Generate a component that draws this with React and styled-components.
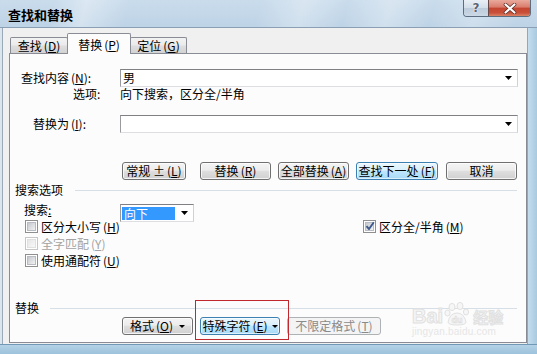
import React from "react";
import styled, { createGlobalStyle, css } from "styled-components";

const FONT = `"Noto Sans CJK SC", "Noto Sans", "DejaVu Sans", sans-serif`;

const GlobalStyle = createGlobalStyle`
  html, body { margin: 0; padding: 0; background: #b9d1e6; }
  body { width: 537px; height: 354px; overflow: hidden; font-family: ${FONT}; font-size: 12px; color: #000; }
  * { box-sizing: border-box; }
`;

const Window = styled.div`
  width: 537px;
  height: 354px;
  display: flex;
  flex-direction: column;
  overflow: hidden;
`;

const TitleBar = styled.div`
  height: 28px;
  flex: none;
  display: flex;
  align-items: flex-start;
  border-bottom: 1px solid #8a9fb3;
  background:
    linear-gradient(105deg,
      rgba(255,255,255,0) 0%, rgba(255,255,255,0) 10%,
      rgba(255,255,255,0.35) 16%, rgba(255,255,255,0) 24%,
      rgba(255,255,255,0) 48%, rgba(255,255,255,0.3) 56%, rgba(255,255,255,0) 64%,
      rgba(255,255,255,0.3) 72%, rgba(255,255,255,0) 80%,
      rgba(255,255,255,0.25) 88%, rgba(255,255,255,0) 96%),
    linear-gradient(180deg, #cadcec 0%, #bdd3e6 100%);
`;

const TitleText = styled.div`
  padding: 8px 0 0 8px;
  font-weight: 700;
  font-size: 13px;
  line-height: 14px;
  color: #000;
`;

const CaptionButtons = styled.div`
  margin-left: auto;
  margin-right: 6px;
  display: flex;
  height: 17px;
  border: 1px solid #5d6d80;
  border-top: none;
  border-radius: 0 0 4px 4px;
  overflow: hidden;
`;

const CaptionButton = styled.div`
  width: ${(p) => p.$w}px;
  height: 100%;
  display: flex;
  align-items: center;
  justify-content: center;
  ${(p) =>
    p.$close
      ? css`
          border-left: 1px solid #6a4a48;
          background: linear-gradient(#e9aa9c 0%, #d97c6c 45%, #c4442f 50%, #c9503a 80%, #da8466 100%);
        `
      : css`
          background: linear-gradient(#e9eff5 0%, #d3dee9 50%, #bccbda 50%, #cbd8e5 100%);
        `}
`;

const HelpGlyph = styled.span`
  font-family: "DejaVu Sans", sans-serif;
  font-weight: 700;
  font-size: 12px;
  line-height: 12px;
  color: #5a6472;
  text-shadow: 0 0 2px #fff, 0 0 1px #fff;
`;

const Middle = styled.div`
  flex: 1;
  min-height: 0;
  display: flex;
`;

const LeftFrame = styled.div`
  width: 3px;
  flex: none;
  background: #dbe5ee;
  border-right: 1px solid #9aa9b8;
`;

const RightFrame = styled.div`
  width: 10px;
  flex: none;
  border-left: 1px solid #8ea8bd;
  background: linear-gradient(90deg, #c4ddee, #a8c9df);
`;

const BottomFrame = styled.div`
  height: 10px;
  flex: none;
  border-top: 1px solid #7199b5;
  background: linear-gradient(#b3d2e6, #9dc2db);
`;

const Client = styled.div`
  flex: 1;
  min-width: 0;
  background: #f0f0f0;
  padding: 5px 0 1px 6px;
  display: flex;
  flex-direction: column;
`;

const TabStrip = styled.div`
  display: flex;
  align-items: flex-end;
  height: 21px;
  margin-bottom: -1px;
  padding-left: 1px;
  position: relative;
  z-index: 1;
`;

const Tab = styled.div`
  width: ${(p) => p.$w}px;
  margin-left: ${(p) => (p.$first ? 0 : -1)}px;
  border: 1px solid #898c95;
  border-bottom: none;
  border-radius: 2px 2px 0 0;
  display: flex;
  align-items: center;
  justify-content: center;
  white-space: nowrap;
  ${(p) =>
    p.$active
      ? css`
          height: 21px;
          background: #fcfcfc;
          position: relative;
          z-index: 1;
        `
      : css`
          height: 16px;
          margin-bottom: 1px;
          background: linear-gradient(#f3f3f3 0%, #ebebeb 45%, #dedede 55%, #d2d2d2 100%);
        `}
`;

const Panel = styled.div`
  flex: 1;
  border: 1px solid #898c95;
  background: #fcfcfc;
  position: relative;
  padding: 0 8px 0 5px;
  display: flex;
  flex-direction: column;
`;

const Acc = styled.span`
  margin-left: 2px;
`;

const Mn = styled.u`
  text-decoration: underline;
  text-underline-offset: 1px;
`;

const Key = ({ k }) => (
  <Acc>
    (<Mn>{k}</Mn>)
  </Acc>
);

const FieldRow = styled.div`
  display: flex;
  align-items: center;
  height: ${(p) => p.$h || 18}px;
  margin-top: ${(p) => p.$mt || 0}px;
  flex: none;
`;

const FieldLabel = styled.div`
  width: ${(p) => p.$w}px;
  padding-left: ${(p) => p.$pl}px;
  flex: none;
  white-space: nowrap;
  line-height: ${(p) => (p.$top ? 12 : 14)}px;
  align-self: ${(p) => (p.$top ? "flex-start" : "auto")};
`;

const fieldBorder = css`
  border: 1px solid;
  border-color: #7f8083 #cfd1d4 #dcdee1 #999a9e;
  background: #fff;
`;

const Combo = styled.div`
  ${fieldBorder};
  flex: ${(p) => (p.$w ? "none" : 1)};
  width: ${(p) => (p.$w ? `${p.$w}px` : "auto")};
  height: 18px;
  display: flex;
  align-items: center;
  padding: 0 5px 0 ${(p) => p.$pl ?? 2}px;
`;

const ComboText = styled.div`
  flex: 1;
  line-height: 14px;
  white-space: nowrap;
`;

const Highlight = styled.div`
  width: ${(p) => p.$w}px;
  height: 13px;
  line-height: 13px;
  background: #3399ff;
  color: #fff;
  padding-left: 2px;
  margin-right: auto;
`;

const Arrow = ({ w = 7, h = 4, c = "#000" }) => (
  <svg width={w} height={h} viewBox={`0 0 ${w} ${h}`} style={{ flex: "none" }}>
    <polygon points={`0,0 ${w},0 ${w / 2},${h}`} fill={c} />
  </svg>
);

const ButtonRow = styled.div`
  display: flex;
  height: 18px;
  margin-top: ${(p) => p.$mt}px;
  padding-left: ${(p) => p.$pl}px;
  flex: none;
`;

const Button = styled.div`
  width: ${(p) => p.$w}px;
  margin-left: ${(p) => p.$ml || 0}px;
  height: 18px;
  border: 1px solid #707070;
  border-radius: 3px;
  display: flex;
  align-items: center;
  justify-content: center;
  gap: ${(p) => p.$gap || 0}px;
  white-space: nowrap;
  line-height: 14px;
  color: #000;
  background: linear-gradient(#f4f4f4 0%, #ececec 45%, #dedede 52%, #d0d0d0 100%);
  box-shadow: inset 0 0 0 1px rgba(255, 255, 255, 0.75);
  ${(p) =>
    p.$hot &&
    css`
      border-color: #3c7fb1;
      background: linear-gradient(#eaf6fd 0%, #d9f0fc 45%, #bee6fd 52%, #a7d9f5 100%);
      box-shadow: inset 0 0 0 1px rgba(255, 255, 255, 0.6);
    `}
  ${(p) =>
    p.$disabled &&
    css`
      border-color: #adb2b5;
      background: #f4f4f4;
      color: #8a8a8a;
      box-shadow: none;
    `}
`;

const GroupHeader = styled.div`
  display: flex;
  align-items: center;
  height: 14px;
  margin-top: ${(p) => p.$mt}px;
  flex: none;
`;

const GroupTitle = styled.div`
  line-height: 14px;
  white-space: nowrap;
`;

const GroupLine = styled.div`
  flex: 1;
  height: 1px;
  margin-left: ${(p) => p.$gap}px;
  margin-right: 1px;
  background: #d5dfe5;
`;

const CheckGrid = styled.div`
  display: grid;
  grid-template-columns: 338px auto;
  grid-auto-rows: 17px;
  margin-top: -4px;
  padding-left: 10px;
  flex: none;
`;

const CheckItem = styled.div`
  display: flex;
  align-items: center;
  gap: 3px;
  white-space: nowrap;
  line-height: 14px;
  color: ${(p) => (p.$disabled ? "#a3a3a3" : "#000")};
`;

const Box = styled.div`
  width: 13px;
  height: 13px;
  flex: none;
  border: 1px solid ${(p) => (p.$disabled ? "#c6c6c6" : "#8f8f8f")};
  background: #fff;
  padding: 1px;
  display: flex;
  align-items: center;
  justify-content: center;
`;

const BoxInner = styled.div`
  width: 9px;
  height: 9px;
  position: relative;
  background: ${(p) =>
    p.$disabled
      ? "linear-gradient(135deg, #e6e6e6, #f8f8f8)"
      : "linear-gradient(135deg, #c4c8ce, #f2f2f2)"};
  border: 1px solid ${(p) => (p.$disabled ? "#e0e0e0" : "#b8bcc2")};
`;

const CheckMark = styled.svg`
  position: absolute;
  left: -2px;
  top: -3px;
`;

const Checkbox = ({ checked, disabled, children }) => (
  <CheckItem $disabled={disabled}>
    <Box $disabled={disabled}>
      <BoxInner $disabled={disabled}>
        {checked && (
          <CheckMark width="12" height="12" viewBox="0 0 12 12">
            <path d="M2.5 6.2 L5 9 L9.8 2.2" fill="none" stroke="#3e5a8c" strokeWidth="1.9" strokeLinejoin="round" />
          </CheckMark>
        )}
      </BoxInner>
    </Box>
    <span>{children}</span>
  </CheckItem>
);

const Annotation = styled.div`
  position: absolute;
  left: 185px;
  top: 246px;
  width: 94px;
  height: 40px;
  border: 1px solid #c0282d;
  pointer-events: none;
`;

const Watermark = styled.div`
  position: absolute;
  left: 402px;
  top: 246px;
  display: flex;
  flex-direction: column;
  pointer-events: none;
  color: #f6f6f6;
`;

const LogoLine = styled.div`
  display: flex;
  align-items: flex-end;
  height: 26px;
  font-weight: 700;
  -webkit-text-stroke: 1px #e1e1e1;
`;

const LogoBig = styled.span`
  font-size: ${(p) => p.$size}px;
  line-height: ${(p) => p.$size}px;
  margin-left: ${(p) => p.$ml || 0}px;
  margin-bottom: ${(p) => p.$mb || 0}px;
  font-family: ${(p) => (p.$cjk ? FONT : `"Liberation Sans", sans-serif`)};
`;

const UrlLine = styled.div`
  font-family: "Liberation Sans", sans-serif;
  font-size: 10px;
  line-height: 12px;
  color: #e6e6e6;
  letter-spacing: 0.2px;
`;

const Paw = () => (
  <svg width="26" height="24" viewBox="0 0 26 24" style={{ marginLeft: 1 }}>
    <g fill="#f6f6f6" stroke="#e1e1e1" strokeWidth="1">
      <ellipse cx="8" cy="5" rx="3" ry="3.6" />
      <ellipse cx="16" cy="4" rx="3" ry="3.6" />
      <ellipse cx="3.5" cy="11" rx="2.6" ry="3" />
      <ellipse cx="22" cy="10" rx="2.6" ry="3" />
      <path d="M4 20 Q6 11 13 11 Q20 11 22 20 Q22 23 13 23 Q4 23 4 20 Z" />
    </g>
    <text x="13" y="21" textAnchor="middle" fontFamily="Liberation Sans, sans-serif" fontWeight="700" fontSize="9" fill="#f8f8f8" stroke="#dcdcdc" strokeWidth="0.6">
      du
    </text>
  </svg>
);

export default function App() {
  return (
    <>
      <GlobalStyle />
      <Window>
        <TitleBar>
          <TitleText>查找和替换</TitleText>
          <CaptionButtons>
            <CaptionButton $w={24}>
              <HelpGlyph>?</HelpGlyph>
            </CaptionButton>
            <CaptionButton $w={42} $close>
              <svg width="14" height="11" viewBox="0 0 14 11">
                <path d="M2.5 1.5 L11.5 9.5 M11.5 1.5 L2.5 9.5" stroke="#5a2a22" strokeWidth="3.6" strokeLinecap="round" />
                <path d="M2.5 1.5 L11.5 9.5 M11.5 1.5 L2.5 9.5" stroke="#fff" strokeWidth="2.2" strokeLinecap="round" />
              </svg>
            </CaptionButton>
          </CaptionButtons>
        </TitleBar>
        <Middle>
          <LeftFrame />
          <Client>
            <TabStrip>
              <Tab $w={58} $first>
                查找<Key k="D" />
              </Tab>
              <Tab $w={64} $active>
                替换<Key k="P" />
              </Tab>
              <Tab $w={57}>
                定位<Key k="G" />
              </Tab>
            </TabStrip>
            <Panel>
              <FieldRow $mt={15}>
                <FieldLabel $w={105} $pl={6}>
                  查找内容<Key k="N" />:
                </FieldLabel>
                <Combo>
                  <ComboText>男</ComboText>
                  <Arrow />
                </Combo>
              </FieldRow>
              <FieldRow $h={14}>
                <FieldLabel $w={105} $pl={58}>
                  选项:
                </FieldLabel>
                <ComboText>向下搜索，区分全/半角</ComboText>
              </FieldRow>
              <FieldRow $mt={14}>
                <FieldLabel $w={105} $pl={18}>
                  替换为<Key k="I" />:
                </FieldLabel>
                <Combo>
                  <ComboText />
                  <Arrow />
                </Combo>
              </FieldRow>

              <ButtonRow $mt={29} $pl={107}>
                <Button $w={64}>
                  常规 ± <Key k="L" />
                </Button>
                <Button $w={71} $ml={14}>
                  替换<Key k="R" />
                </Button>
                <Button $w={71} $ml={7}>
                  全部替换<Key k="A" />
                </Button>
                <Button $w={82} $ml={7} $hot>
                  查找下一处<Key k="F" />
                </Button>
                <Button $w={71} $ml={8}>
                  取消
                </Button>
              </ButtonRow>

              <GroupHeader $mt={3}>
                <GroupTitle>搜索选项</GroupTitle>
                <GroupLine $gap={12} />
              </GroupHeader>
              <FieldRow $mt={7}>
                <FieldLabel $w={105} $pl={9} $top>
                  搜索<Mn>:</Mn>
                </FieldLabel>
                <Combo $w={74} $pl={1}>
                  <Highlight $w={53}>向下</Highlight>
                  <Arrow />
                </Combo>
              </FieldRow>
              <CheckGrid>
                <Checkbox>
                  区分大小写<Key k="H" />
                </Checkbox>
                <Checkbox checked>
                  区分全/半角<Key k="M" />
                </Checkbox>
                <Checkbox disabled>
                  全字匹配<Key k="Y" />
                </Checkbox>
                <span />
                <Checkbox>
                  使用通配符<Key k="U" />
                </Checkbox>
              </CheckGrid>

              <GroupHeader $mt={32}>
                <GroupTitle>替换</GroupTitle>
                <GroupLine $gap={11} />
              </GroupHeader>
              <ButtonRow $mt={2} $pl={107}>
                <Button $w={71} $gap={6}>
                  <span>
                    格式<Key k="O" />
                  </span>
                  <Arrow w={6} h={3} />
                </Button>
                <Button $w={80} $ml={7} $gap={4} $hot>
                  <span>
                    特殊字符<Key k="E" />
                  </span>
                  <Arrow w={6} h={3} />
                </Button>
                <Button $w={94} $ml={7} $disabled>
                  不限定格式<Key k="T" />
                </Button>
              </ButtonRow>

              <Watermark>
                <LogoLine>
                  <LogoBig $size={20}>Bai</LogoBig>
                  <Paw />
                  <LogoBig $size={15} $ml={3} $mb={2} $cjk>
                    经验
                  </LogoBig>
                </LogoLine>
                <UrlLine>jingyan.baidu.com</UrlLine>
              </Watermark>
              <Annotation />
            </Panel>
          </Client>
          <RightFrame />
        </Middle>
        <BottomFrame />
      </Window>
    </>
  );
}
